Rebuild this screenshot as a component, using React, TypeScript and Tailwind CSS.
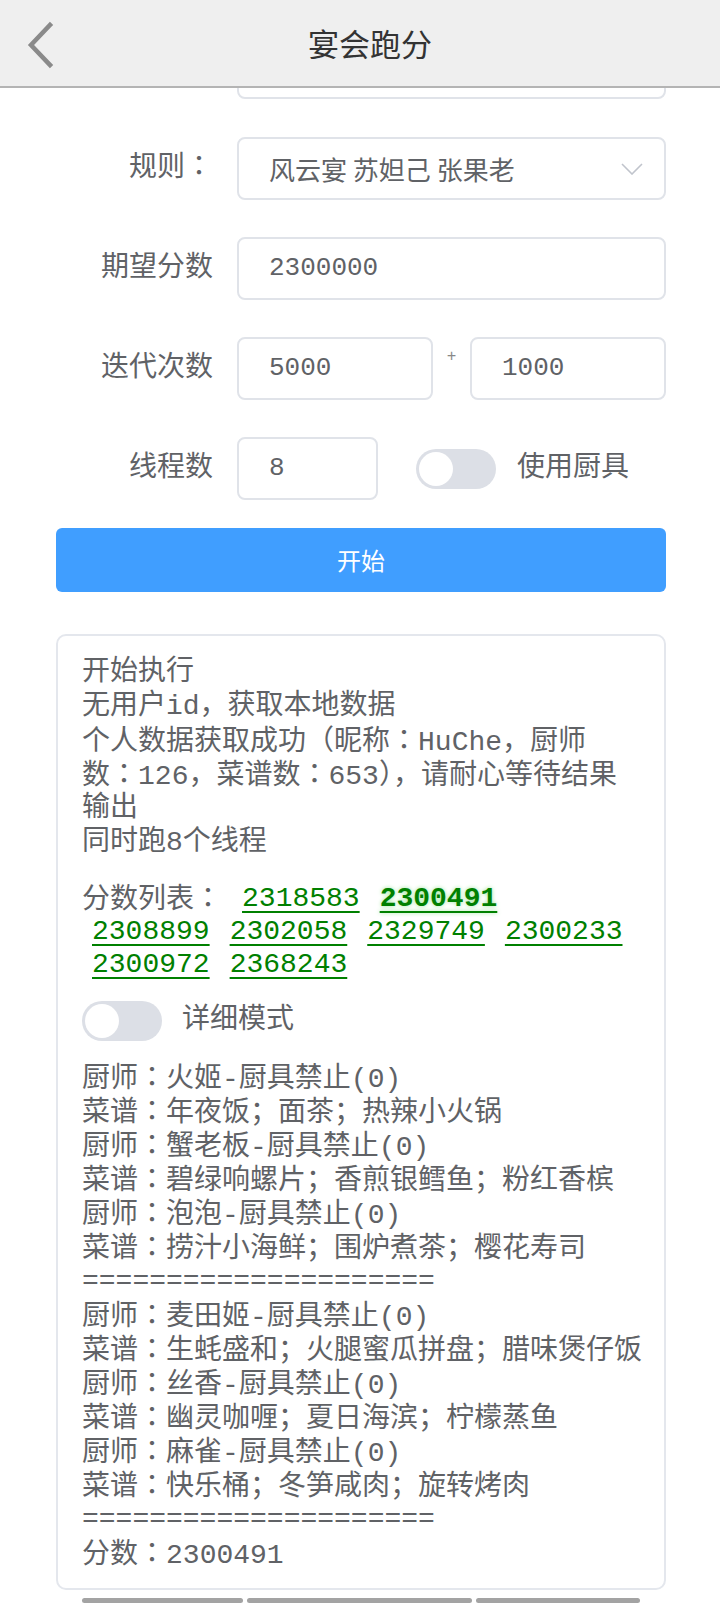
import React from 'react';

const scores = ['2318583', '2300491', '2308899', '2302058', '2329749', '2300233', '2300972', '2368243'];
const best = '2300491';

const introLines = [
  '开始执行',
  '无用户id，获取本地数据',
  '个人数据获取成功（昵称：HuChe，厨师',
  '数：126，菜谱数：653），请耐心等待结果',
  '输出',
  '同时跑8个线程',
];

const sep = '=====================';

const detailLines = [
  '厨师：火姬-厨具禁止(0)',
  '菜谱：年夜饭；面茶；热辣小火锅',
  '厨师：蟹老板-厨具禁止(0)',
  '菜谱：碧绿响螺片；香煎银鳕鱼；粉红香槟',
  '厨师：泡泡-厨具禁止(0)',
  '菜谱：捞汁小海鲜；围炉煮茶；樱花寿司',
  sep,
  '厨师：麦田姬-厨具禁止(0)',
  '菜谱：生蚝盛和；火腿蜜瓜拼盘；腊味煲仔饭',
  '厨师：丝香-厨具禁止(0)',
  '菜谱：幽灵咖喱；夏日海滨；柠檬蒸鱼',
  '厨师：麻雀-厨具禁止(0)',
  '菜谱：快乐桶；冬笋咸肉；旋转烤肉',
  sep,
  '分数：2300491',
];

// full-width colons sit in the middle of their cell in the reference
function Text({ value }: { value: string }) {
  const parts = value.split('：');
  return (
    <>
      {parts.map((p, i) => (
        <React.Fragment key={i}>
          {i > 0 && <span className="font-['Noto_Sans_CJK_TC',sans-serif] leading-none">：</span>}
          {p}
        </React.Fragment>
      ))}
    </>
  );
}

function Toggle() {
  return (
    <div className="w-[80px] h-[40px] rounded-full bg-[#dcdfe6] flex items-center px-[3px] shrink-0">
      <div className="w-[34px] h-[34px] rounded-full bg-white" />
    </div>
  );
}

function Label({ text }: { text: string }) {
  return (
    <div className="w-[181px] pr-[24px] text-right text-[28px] text-[#606266] shrink-0 whitespace-nowrap">
      <Text value={text} />
    </div>
  );
}

function Box({ value, className = '' }: { value: string; className?: string }) {
  return (
    <div
      className={`h-[63px] border-2 border-[#e0e3e9] rounded-[8px] px-[30px] flex items-center text-[26px] text-[#606266] ${className}`}
    >
      {value}
    </div>
  );
}

export default function App() {
  return (
    <div className="w-[720px] h-[1605px] bg-white overflow-hidden font-['Liberation_Mono','Noto_Sans_CJK_SC',monospace]">
      {/* Header */}
      <div className="relative h-[88px] bg-[#efefef] border-b-2 border-[#b4b4b4] flex items-center justify-center pl-[20px]">
        <svg className="absolute left-[20px] top-[21px]" width="40" height="48" viewBox="0 0 40 48" fill="none">
          <path d="M30 4 L11 24 L30 44" stroke="#8a8a8a" strokeWidth="4.5" strokeLinecap="square" />
        </svg>
        <div className="text-[31px] text-[#333] font-['Noto_Sans_CJK_SC',sans-serif]">宴会跑分</div>
      </div>

      {/* Previous row, scrolled under the header */}
      <div className="h-[11px] overflow-hidden flex items-end pl-[237px] pr-[54px]">
        <div className="h-[63px] w-full shrink-0 border-2 border-[#e0e3e9] rounded-[8px]" />
      </div>

      {/* Form */}
      <div className="pl-[56px] pr-[54px] pt-[38px] flex flex-col gap-[37px]">
        <div className="flex items-center">
          <Label text="规则：" />
          <div className="flex-1 h-[63px] border-2 border-[#e0e3e9] rounded-[8px] pl-[30px] pr-[21px] flex items-center justify-between text-[26px] text-[#606266] font-['Noto_Sans_CJK_SC',sans-serif]">
            <span>风云宴 苏妲己 张果老</span>
            <svg width="22" height="12" viewBox="0 0 22 12" fill="none">
              <path d="M1 1 L11 11 L21 1" stroke="#c0c4cc" strokeWidth="1.6" />
            </svg>
          </div>
        </div>

        <div className="flex items-center">
          <Label text="期望分数" />
          <Box value="2300000" className="flex-1" />
        </div>

        <div className="flex items-center">
          <Label text="迭代次数" />
          <Box value="5000" className="flex-1" />
          <div className="w-[37px] self-start pt-[12px] text-center text-[16px] leading-[16px] text-[#888]">+</div>
          <Box value="1000" className="flex-1" />
        </div>

        <div className="flex items-center">
          <Label text="线程数" />
          <Box value="8" className="w-[141px]" />
          <div className="ml-[38px]">
            <Toggle />
          </div>
          <div className="ml-[21px] text-[28px] text-[#606266]">使用厨具</div>
        </div>
      </div>

      <div className="pl-[56px] pr-[54px]">
        <button className="mt-[28px] w-full h-[64px] rounded-[6px] bg-[#409eff] text-white text-[24px] font-['Noto_Sans_CJK_SC',sans-serif]">
          开始
        </button>

        {/* Log output */}
        <div className="mt-[42px] h-[956px] border-2 border-[#e4e7ed] rounded-[10px] pl-[24px] pr-[24px] pt-[20px] text-[28px] leading-[34px] text-[#606266]">
          {introLines.map((line, i) => (
            <div key={i} className="h-[34px] whitespace-nowrap">
              <Text value={line} />
            </div>
          ))}

          <div className="mt-[22px] flex flex-wrap leading-[33px]">
            <span className="h-[33px] mr-[10px]">
              <Text value="分数列表：" />
            </span>
            {scores.map((s) => (
              <span
                key={s}
                className={`h-[33px] mx-[10px] text-[#008000] underline decoration-2 underline-offset-[5px] ${
                  s === best ? 'font-bold [text-shadow:0_0_4px_#9be59b]' : ''
                }`}
              >
                {s}
              </span>
            ))}
          </div>

          <div className="mt-[20px] flex items-center gap-[20px]">
            <Toggle />
            <span>详细模式</span>
          </div>

          <div className="mt-[20px]">
            {detailLines.map((line, i) => (
              <div key={i} className="h-[34px] whitespace-nowrap">
                <Text value={line} />
              </div>
            ))}
          </div>
        </div>

        {/* Cut-off bars below */}
        <div className="mt-[8px] ml-[26px] flex gap-[4px]">
          <div className="w-[161px] h-[5px] rounded-sm bg-[#a3a3a3]" />
          <div className="w-[225px] h-[5px] rounded-sm bg-[#a3a3a3]" />
          <div className="w-[164px] h-[5px] rounded-sm bg-[#a3a3a3]" />
        </div>
      </div>
    </div>
  );
}
